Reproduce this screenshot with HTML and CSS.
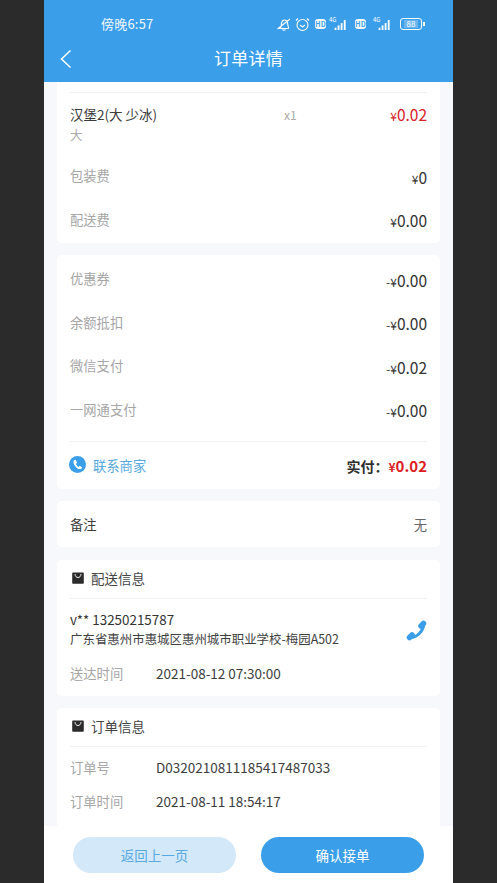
FILE: index.html
```html
<!DOCTYPE html>
<html lang="zh">
<head>
<meta charset="utf-8">
<title>订单详情</title>
<link rel="stylesheet" href="styles.css">
</head>
<body>
<div class="phone">
  <header class="header">
    <div class="status">
      <span class="clock">傍晚6:57</span>
      <div class="status-icons">
        <svg class="ic" width="16" height="16" viewBox="0 0 16 16" fill="none" stroke="#fff" stroke-width="1.1"><path d="M3 12.500h10M4.500 12c1-1.500.6-3 1-5 .4-1.700 1.500-3 3-3s2.600 1 3 2.700c.3 1.700.2 3.800 1.500 5.300M6.500 13.500c.5 1 2.500 1 3 0M1.500 13 14 3"/></svg>
        <svg class="ic ic-alarm" width="15" height="15" viewBox="0 0 15 15" fill="none" stroke="#fff" stroke-width="1.100"><circle cx="7.500" cy="8" r="5.500"/><path d="M5 8l2.500 2L10 8M1 3.500 3 1.500M14 3.500l-2-2"/></svg>
        <span class="hd">HD</span>
        <span class="net"><span class="net-label">4G</span><svg width="15" height="11" viewBox="0 0 15 12" fill="#fff"><rect x="0" y="9.500" width="2" height="2.500"/><rect x="3.300" y="7" width="2" height="5"/><rect x="6.600" y="4.500" width="2" height="7.500"/><rect x="10" y="1" width="2" height="11"/></svg></span>
        <span class="hd hd-second">HD</span>
        <span class="net net-second"><span class="net-label">4G</span><svg width="15" height="11" viewBox="0 0 15 12" fill="#fff"><rect x="0" y="9.500" width="2" height="2.500"/><rect x="3.300" y="7" width="2" height="5"/><rect x="6.600" y="4.500" width="2" height="7.500"/><rect x="10" y="1" width="2" height="11"/></svg></span>
        <span class="battery"><span class="battery-num">88</span></span><span class="battery-tip"></span>
      </div>
    </div>
    <div class="nav">
      <svg class="back" width="14" height="20" viewBox="0 0 14 20" fill="none" stroke="#fff" stroke-width="1.500"><path d="M11.500 1.500 2.500 10l9 8.500"/></svg>
      <h1 class="title">订单详情</h1>
    </div>
  </header>

  <main class="content">
    <section class="card card-first">
      <div class="rule rule-top"></div>
      <div class="item">
        <span class="item-name">汉堡2(大 少冰)</span>
        <span class="item-qty">x1</span>
        <span class="price-red"><span class="yen">¥</span>0.02</span>
      </div>
      <div class="item-sub">大</div>
      <div class="row row-pack"><span class="label">包装费</span><span class="amount"><span class="yen">¥</span>0</span></div>
      <div class="row row-ship"><span class="label">配送费</span><span class="amount"><span class="yen">¥</span>0.00</span></div>
    </section>

    <section class="card card-pay">
      <div class="row"><span class="label">优惠券</span><span class="amount"><span class="yen">-¥</span>0.00</span></div>
      <div class="row"><span class="label">余额抵扣</span><span class="amount"><span class="yen">-¥</span>0.00</span></div>
      <div class="row"><span class="label">微信支付</span><span class="amount"><span class="yen">-¥</span>0.02</span></div>
      <div class="row"><span class="label">一网通支付</span><span class="amount"><span class="yen">-¥</span>0.00</span></div>
      <div class="rule rule-pay"></div>
      <div class="total">
        <span class="contact">
          <svg width="17" height="17" viewBox="0 0 17 17"><circle cx="8.500" cy="8.500" r="8.500" fill="#3a9ee9"/><path d="M5.800 3.800c-.9.500-1.500 1.300-1.300 2.600.4 2.900 3.300 6.300 6 6.700 1.100.2 2-.3 2.500-1.100.2-.3.100-.6-.2-.8l-1.700-1.100c-.3-.2-.6-.1-.8.100l-.6.700c-1.300-.6-2.400-1.900-2.800-3.200l.8-.5c.3-.2.400-.5.300-.8l-1.300-2.400c-.2-.3-.6-.4-.9-.2z" fill="#fff"/></svg>
          <span>联系商家</span>
        </span>
        <span class="paid">实付：<em><span class="yen">¥</span>0.02</em></span>
      </div>
    </section>

    <section class="card card-note">
      <span class="note-label">备注</span>
      <span class="note-value">无</span>
    </section>

    <section class="card card-delivery">
      <div class="card-head">
        <svg width="12" height="12" viewBox="0 0 12 12"><path d="M1 .5h10a.8.800 0 0 1 .8.800v9.700a.8.800 0 0 1-.8.800H1a.8.800 0 0 1-.8-.8V1.300A.8.800 0 0 1 1 .5z" fill="#2b2b2b"/><path d="M3 2c.2 2.500 1.400 3.500 3 3.500S8.800 4.500 9 2" fill="none" stroke="#fff" stroke-width=".9"/></svg>
        <span>配送信息</span>
      </div>
      <div class="address-block">
        <div class="address-text">
          <div class="person">v** 13250215787</div>
          <div class="address">广东省惠州市惠城区惠州城市职业学校-梅园A502</div>
        </div>
        <svg class="phone-ic" width="21" height="21" viewBox="0 0 21 21" fill="none" stroke="#3a9ee9" stroke-linecap="round"><path d="M17.500 4C18 10 11 18 4 17.500" stroke-width="3"/><path d="M17.500 3.500 15 6M3.500 17.500 6 15" stroke-width="5.500"/></svg>
      </div>
      <div class="info-row info-arrive"><span class="info-label">送达时间</span><span class="info-value">2021-08-12 07:30:00</span></div>
    </section>

    <section class="card card-order">
      <div class="card-head">
        <svg width="12" height="12" viewBox="0 0 12 12"><path d="M1 .5h10a.8.800 0 0 1 .8.800v9.700a.8.800 0 0 1-.8.800H1a.8.800 0 0 1-.8-.8V1.300A.8.800 0 0 1 1 .5z" fill="#2b2b2b"/><path d="M3 2c.2 2.500 1.400 3.500 3 3.500S8.800 4.500 9 2" fill="none" stroke="#fff" stroke-width=".9"/></svg>
        <span>订单信息</span>
      </div>
      <div class="info-row info-no"><span class="info-label">订单号</span><span class="info-value">D0320210811185417487033</span></div>
      <div class="info-row info-time"><span class="info-label">订单时间</span><span class="info-value">2021-08-11 18:54:17</span></div>
    </section>
  </main>

  <footer class="footer">
    <button class="btn btn-light">返回上一页</button>
    <button class="btn btn-primary">确认接单</button>
  </footer>
</div>
</body>
</html>
```
FILE: styles.css
```css
* { box-sizing: border-box; margin: 0; padding: 0; }
html, body { width: 497px; height: 883px; overflow: hidden; }
body {
  background: #2b2b2b;
  font-family: "Noto Sans CJK SC", "Noto Sans", sans-serif;
  padding-left: 44px;
}
.phone {
  width: 409px;
  height: 883px;
  background: #f6f8fc;
  display: flex;
  flex-direction: column;
  overflow: hidden;
}
.header { height: 82px; flex: none; background: #3a9ee9; color: #fff; }
.status { height: 36px; padding: 12px 0 0 57px; display: flex; align-items: center; }
.clock { font-size: 13px; width: 175px; color: #f2f8fe; line-height: 24px; letter-spacing: .2px; }
.status-icons { display: flex; align-items: center; height: 24px; }
.ic { margin-right: 3px; flex: none; }
.ic-alarm { margin-right: 5px; }
.hd {
  width: 11px; height: 10px; border-radius: 3px; background: #fff; color: #3a9ee9; flex: none;
  font-size: 7px; font-weight: 700; line-height: 10px; text-align: center; margin-right: 3px;
}
.hd-second { margin-left: 6px; }
.net { position: relative; flex: none; display: flex; justify-content: flex-end; align-items: flex-end; width: 20px; height: 12px; }
.net-second { margin-left: 4px; }
.net-label { position: absolute; left: 0; top: -1px; font-size: 6px; line-height: 6px; color: #fff; }
.battery {
  width: 22px; height: 12px; border: 1px solid #fff; border-radius: 3px; flex: none;
  margin-left: 7px; display: flex; align-items: center; justify-content: center;
}
.battery-num { font-size: 8px; line-height: 8px; color: #fff; background: rgba(255,255,255,.25); padding: 0 3px; }
.battery-tip { width: 1.500px; height: 4px; background: #fff; margin-left: 1px; flex: none; }
.nav { height: 46px; display: flex; align-items: center; justify-content: center; position: relative; }
.back { position: absolute; left: 15px; top: 13px; }
.title { font-size: 17px; font-weight: 400; letter-spacing: .2px; color: #fff; line-height: 44px; padding-bottom: 2px; }

.content { flex: 1; min-height: 0; overflow: hidden; padding: 0 13px; }
.card { background: #fff; border-radius: 5px; padding: 0 13px; margin-bottom: 12px; }
.rule { background: #f1f1f3; }
.rule-top { height: 1px; }

.card-first { height: 161px; padding-top: 10px; border-radius: 0 0 5px 5px; }
.item { display: flex; align-items: center; height: 42px; }
.item-name { font-size: 13.500px; color: #3c3c3c; width: 214px; }
.item-qty { font-size: 12px; color: #aaa; flex: 1; }
.price-red { font-size: 15.500px; color: #d9222a; }
.yen { font-size: 12px; }
.item-sub { font-size: 12.500px; color: #a9a9a9; line-height: 18px; margin-top: -9px; }
.row { display: flex; justify-content: space-between; align-items: center; height: 43.500px; }
.row-pack { margin-top: 11px; height: 43px; }
.row-ship { height: 44px; }
.label { font-size: 13.300px; color: #a6a6a6; position: relative; top: -1px; }
.row-pack .label, .row-ship .label { top: -1px; }
.amount { font-size: 15.500px; color: #333; }

.card-pay { height: 234px; padding-top: 3px; }
.rule-pay { height: 1px; margin-top: 9px; }
.total { display: flex; justify-content: space-between; align-items: center; height: 47px; }
.contact { display: flex; align-items: center; gap: 7px; font-size: 13.300px; color: #58a9e0; margin-left: -1px; }
.contact svg { position: relative; top: -1px; }
.paid { font-size: 14px; font-weight: 700; color: #2f2f2f; display: flex; align-items: center; }
.paid em { font-style: normal; font-size: 15px; color: #dc1c22; }

.card-note { height: 46px; display: flex; justify-content: space-between; align-items: center; margin-bottom: 13px; }
.note-label { font-size: 13.300px; color: #3a3a3a; }
.note-value { font-size: 13.300px; color: #666; }

.card-head {
  display: flex; align-items: center; gap: 7px; height: 39px; padding-bottom: 2px;
  border-bottom: 1px solid #f1f1f3; font-size: 13.500px; color: #444; padding-left: 2px;
}
.card-delivery { height: 136px; }
.address-block { display: flex; justify-content: space-between; align-items: center; padding-top: 11px; }
.person { font-size: 13.400px; line-height: 19px; color: #333; }
.address { font-size: 12.450px; line-height: 21px; color: #3e3e3e; }
.phone-ic { flex: none; }
.info-row { display: flex; align-items: center; height: 34px; }
.info-arrive { margin-top: 6px; }
.info-no { margin-top: 3px; }
.info-label { width: 86px; font-size: 13.300px; color: #a6a6a6; }
.info-value { font-size: 13.500px; color: #3c3c3c; }
.card-order { height: 200px; }

.footer {
  flex: none; height: 57px; background: #fff; display: flex;
  justify-content: space-between; padding: 11px 29px 0;
}
.btn { width: 163px; height: 36px; border: 0; border-radius: 18px; font-family: inherit; font-size: 13.500px; }
.btn-light { background: #d3e8f9; color: #58a9e0; }
.btn-primary { background: #3a9ee9; color: #fff; }
```
